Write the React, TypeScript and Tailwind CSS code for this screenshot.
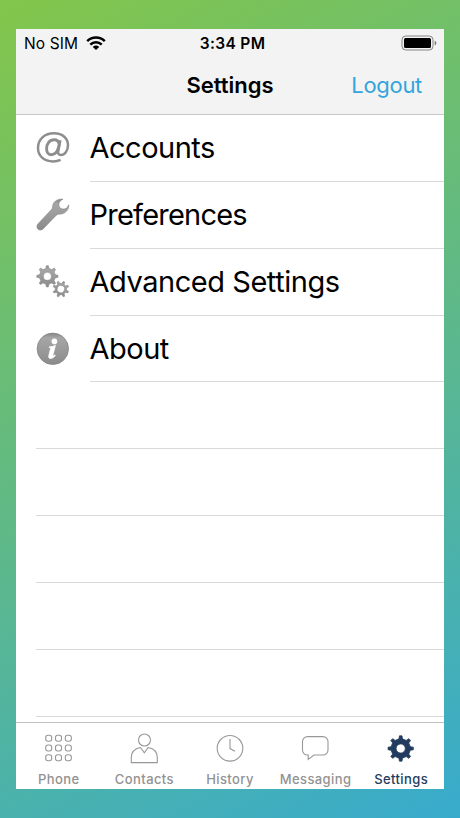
import React from "react";

// Outline of a cog with flat teeth around the point (cx, cy).
function gearPath(cx: number, cy: number, outer: number, inner: number, hole: number, teeth: number, top = 0.2, base = 0.3) {
  const points: string[] = [];
  const step = (Math.PI * 2) / teeth;
  for (let i = 0; i < teeth; i++) {
    const a = i * step - Math.PI / 2;
    for (const [offset, r] of [[-base, inner], [-top, outer], [top, outer], [base, inner]]) {
      const t = a + offset * step;
      points.push(`${(cx + r * Math.cos(t)).toFixed(2)} ${(cy + r * Math.sin(t)).toFixed(2)}`);
    }
  }
  return `M${points.join("L")}ZM${cx - hole} ${cy}a${hole} ${hole} 0 1 0 ${hole * 2} 0a${hole} ${hole} 0 1 0 ${-hole * 2} 0Z`;
}

function Metal({ id }: { id: string }) {
  return (
    <defs>
      <linearGradient id={id} x1="0" y1="0" x2="0" y2="1">
        <stop offset="0" stopColor="#858585" />
        <stop offset="0.15" stopColor="#a6a6a6" />
        <stop offset="1" stopColor="#8b8b8b" />
      </linearGradient>
    </defs>
  );
}

function AtIcon() {
  return (
    <svg width="34" height="34" viewBox="0 0 34 34" fill="none" stroke="#8e8e8e" strokeLinecap="round">
      <path d="M24.6 28.900C22.300 29.900 19.800 30.400 17 30.400C7.800 30.400 2 24.900 2 17.100C2 8.300 8.600 2.300 18 2.300C26.700 2.300 32 7.400 32 14.100C32 20 28.600 24 24.900 24C22.600 24 21.700 22.600 22.200 20.400L24.300 9.200" strokeWidth="2.500" strokeLinecap="butt" />
      <path d="M23.200 13.300C22.700 10.200 20.800 8.700 18.200 8.700C13.500 8.700 10.600 13 10.600 17.700C10.600 21.200 12.500 23.700 15.500 23.700C19.600 23.700 22.300 19.300 23.200 13.300Z" strokeWidth="2.900" />
    </svg>
  );
}

function WrenchIcon() {
  return (
    <svg width="34" height="34" viewBox="0 0 34 34">
      <Metal id="wrench" />
      <path
        d="M27 1.300C22.500.5 17.700 3 16.800 7.200c-.4 1.800-.2 3.200-1.200 4.200L2.100 25.800c-1.500 1.600-1.500 3.900-.2 5.200 1.500 1.500 3.800 1.400 5.300-.2L20.200 17.300c1.200-1.200 2.500-1 4.400-1.200 4.700-.4 8.400-4.400 8.200-9.300-1.200 3-3.500 4.700-6.200 4.200-2.700-.5-4.200-2.500-3.700-5.300.4-2.200 2-3.700 4.100-4.400Z"
        fill="url(#wrench)"
        stroke="#808080"
        strokeWidth="0.6"
        strokeLinejoin="round"
      />
    </svg>
  );
}

function GearsIcon() {
  return (
    <svg width="34" height="34" viewBox="0 0 34 34">
      <Metal id="gears" />
      <g fill="url(#gears)" stroke="#828282" strokeWidth="0.5" fillRule="evenodd">
        <path d={gearPath(11.4, 11.3, 10.7, 8, 4, 8, 0.11, 0.27)} />
        <path d={gearPath(24.9, 24.1, 8, 5.7, 3.7, 8, 0.13, 0.25)} transform="rotate(22.5 24.9 24.1)" />
      </g>
    </svg>
  );
}

function InfoIcon() {
  return (
    <svg width="34" height="34" viewBox="0 0 34 34">
      <Metal id="info" />
      <circle cx="16.800" cy="16.800" r="15.7" fill="url(#info)" stroke="#858585" strokeWidth="0.8" />
      <circle cx="18.4" cy="9.400" r="2.800" fill="#fff" />
      <path d="M13.5 14.700c2.1.1 3.800-.4 5.900-1.200l-2.600 9.900c-.2.9.5.8 2-.5l.6.7c-2 2.400-4 3.100-5.400 2.800-1.300-.3-1.600-1.300-1.200-2.800l1.700-6.500c.3-1.200 0-1.500-1.300-1.500Z" fill="#fff" stroke="#fff" strokeWidth="0.8" />
    </svg>
  );
}

function PhoneIcon() {
  return (
    <svg width="30" height="30" viewBox="0 0 30 30" fill="none" stroke="#989898" strokeWidth="1.1">
      {[2.2, 12, 21.8].map((y) =>
        [1.7, 11.5, 21.3].map((x) => <rect key={`${x}-${y}`} x={x} y={y} width="6" height="6" rx="2.2" />),
      )}
    </svg>
  );
}

function ContactsIcon() {
  return (
    <svg width="30" height="32" viewBox="0 0 30 32" fill="none" stroke="#989898" strokeWidth="1.1">
      <circle cx="15.500" cy="7" r="6" />
      <path d="M11.500 14.500C5.800 15.500 2.300 19.200 2.300 24.700v4.900h26v-4.900c0-5.500-3.500-9.200-9.200-10.200L15.300 19.700Z" />
    </svg>
  );
}

function HistoryIcon() {
  return (
    <svg width="30" height="30" viewBox="0 0 30 30" fill="none" stroke="#989898" strokeWidth="1.1">
      <circle cx="15" cy="15.300" r="12.800" />
      <path d="M15 6v9.600l5 2.700" />
    </svg>
  );
}

function MessagingIcon() {
  return (
    <svg width="30" height="30" viewBox="0 0 30 30" fill="none" stroke="#989898" strokeWidth="1.100">
      <path d="M6.500 3.600h15.500a5 5 0 0 1 5 5v8.400a5 5 0 0 1-5 5H13L7.200 26.400v-4.400H6.500a5 5 0 0 1-5-5V8.600a5 5 0 0 1 5-5Z" />
    </svg>
  );
}

function SettingsIcon() {
  return (
    <svg width="30" height="30" viewBox="0 0 30 30">
      <path d={gearPath(14.7, 15.5, 12.7, 9.8, 4.6, 8, 0.13, 0.23)} fill="#213c5e" stroke="#213c5e" strokeWidth="0.8" strokeLinejoin="round" fillRule="evenodd" />
    </svg>
  );
}

const rows = [
  { label: "Accounts", icon: <AtIcon />, spacing: "tracking-[-0.500px]" },
  { label: "Preferences", icon: <WrenchIcon />, spacing: "tracking-[-0.780px]" },
  { label: "Advanced Settings", icon: <GearsIcon />, spacing: "tracking-[-0.460px]" },
  { label: "About", icon: <InfoIcon />, spacing: "tracking-[-0.500px]" },
];

const tabs = [
  { label: "Phone", icon: <PhoneIcon /> },
  { label: "Contacts", icon: <ContactsIcon /> },
  { label: "History", icon: <HistoryIcon /> },
  { label: "Messaging", icon: <MessagingIcon /> },
  { label: "Settings", icon: <SettingsIcon />, active: true },
];

export default function App() {
  return (
    <div className="h-[818px] w-[460px] overflow-hidden bg-[linear-gradient(152deg,#83c64b_0%,#5fb987_50%,#38abcd_100%)] px-4 pt-[29px] text-black" style={{ fontFamily: "Inter, sans-serif" }}>
      <div className="flex h-[759.600px] w-[428px] flex-col overflow-hidden bg-white">
        <header className="h-[86px] shrink-0 border-b border-[#c9c9cb] bg-[#f3f3f3]">
          <div className="grid h-7 grid-cols-3 items-center pl-2 pr-[7px] text-[15.500px]">
            <div className="flex items-center gap-2 pt-px">
              <span className="tracking-[0.100px]">No SIM</span>
              <svg className="-mt-px" width="20" height="15" viewBox="0 0 20 15" fill="none" stroke="#000" strokeWidth="2.500">
                <path d="M1.200 5.200a12.500 12.500 0 0 1 17.600 0M4.300 8.700a8 8 0 0 1 11.400 0" />
                <path d="M10 14 6.800 10.900a4.500 4.500 0 0 1 6.400 0Z" fill="#000" stroke="none" />
              </svg>
            </div>
            <span className="whitespace-nowrap pl-[4px] pt-px text-center font-semibold tracking-[0.350px]">3:34 PM</span>
            <svg className="justify-self-end" width="36" height="16" viewBox="0 0 36 16">
              <rect x="1" y="1" width="31" height="14" rx="3.800" fill="none" stroke="#858585" />
              <rect x="3" y="3" width="27" height="10" rx="1.500" fill="#000" />
              <path d="M33.700 5.700c2.200 1 2.200 3.600 0 4.600Z" fill="#777" />
            </svg>
          </div>
          <div className="grid h-[57px] grid-cols-3 items-center text-[22px]">
            <span />
            <h1 className="text-center font-semibold">Settings</h1>
            <button className="pr-[22px] text-right tracking-[-0.300px] text-[#32a5dc]">Logout</button>
          </div>
        </header>
        <main className="h-[607px] shrink-0 overflow-hidden">
          {rows.map((row) => (
            <div key={row.label} className="flex h-[66.850px] pl-5">
              <div className="mt-4 w-[53.500px]">{row.icon}</div>
              <div className={`flex flex-1 items-center border-b border-[#d9d9db] pt-[0.500px] text-[29px] ${row.spacing}`}>{row.label}</div>
            </div>
          ))}
          {[0, 1, 2, 3, 4].map((row) => (
            <div key={row} className="ml-5 h-[66.850px] border-b border-[#d9d9db]" />
          ))}
        </main>
        <nav className="grid flex-1 grid-cols-5 border-t border-[#c0c0c2]">
          {tabs.map((tab) => (
            <div key={tab.label} className={tab.active ? "flex flex-col items-center text-[#213c5e]" : "flex flex-col items-center text-[#929292]"}>
              <div className="mt-2.5 h-[36px]">{tab.icon}</div>
              <span className="text-[13px] leading-[20px] font-medium tracking-[0.4px]">{tab.label}</span>
            </div>
          ))}
        </nav>
      </div>
    </div>
  );
}
